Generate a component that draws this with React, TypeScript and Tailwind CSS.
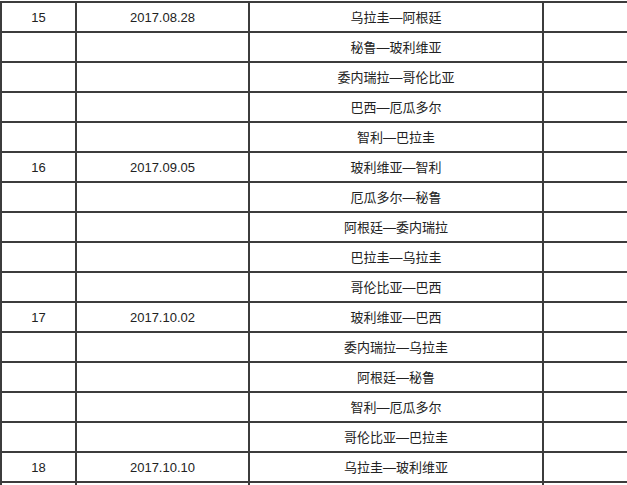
const rounds = [
  {
    no: '15',
    date: '2017.08.28',
    games: ['乌拉圭—阿根廷', '秘鲁—玻利维亚', '委内瑞拉—哥伦比亚', '巴西—厄瓜多尔', '智利—巴拉圭'],
  },
  {
    no: '16',
    date: '2017.09.05',
    games: ['玻利维亚—智利', '厄瓜多尔—秘鲁', '阿根廷—委内瑞拉', '巴拉圭—乌拉圭', '哥伦比亚—巴西'],
  },
  {
    no: '17',
    date: '2017.10.02',
    games: ['玻利维亚—巴西', '委内瑞拉—乌拉圭', '阿根廷—秘鲁', '智利—厄瓜多尔', '哥伦比亚—巴拉圭'],
  },
  {
    no: '18',
    date: '2017.10.10',
    games: ['乌拉圭—玻利维亚'],
  },
]

export default function App() {
  const rows = rounds.flatMap((r) =>
    r.games.map((g, i) => ({ no: i === 0 ? r.no : '', date: i === 0 ? r.date : '', game: g })),
  )

  return (
    <div
      className="w-[627px] h-[485px] overflow-hidden bg-white pt-px"
      style={{ fontFamily: '"Liberation Sans", "Noto Sans CJK SC", sans-serif' }}
    >
      <table className="table-fixed border-collapse w-[627px] text-[13px] text-[#222222]">
        <colgroup>
          <col className="w-[75px]" />
          <col className="w-[173px]" />
          <col className="w-[294px]" />
          <col className="w-[85px]" />
        </colgroup>
        <tbody>
          {rows.map((row, i) => (
            <tr key={i} className="h-[30px]">
              <td className="border-2 border-[#3c3c3c] text-center p-0 pt-[2px]">{row.no}</td>
              <td className="border-2 border-[#3c3c3c] text-center p-0 pt-[2px]">{row.date}</td>
              <td className="border-2 border-[#3c3c3c] text-center p-0 pt-[2px]">{row.game}</td>
              <td className="border-2 border-[#3c3c3c] p-0"></td>
            </tr>
          ))}
          <tr className="h-[30px]">
            <td className="border-2 border-[#3c3c3c]"></td>
            <td className="border-2 border-[#3c3c3c]"></td>
            <td className="border-2 border-[#3c3c3c]"></td>
            <td className="border-2 border-[#3c3c3c]"></td>
          </tr>
        </tbody>
      </table>
    </div>
  )
}
